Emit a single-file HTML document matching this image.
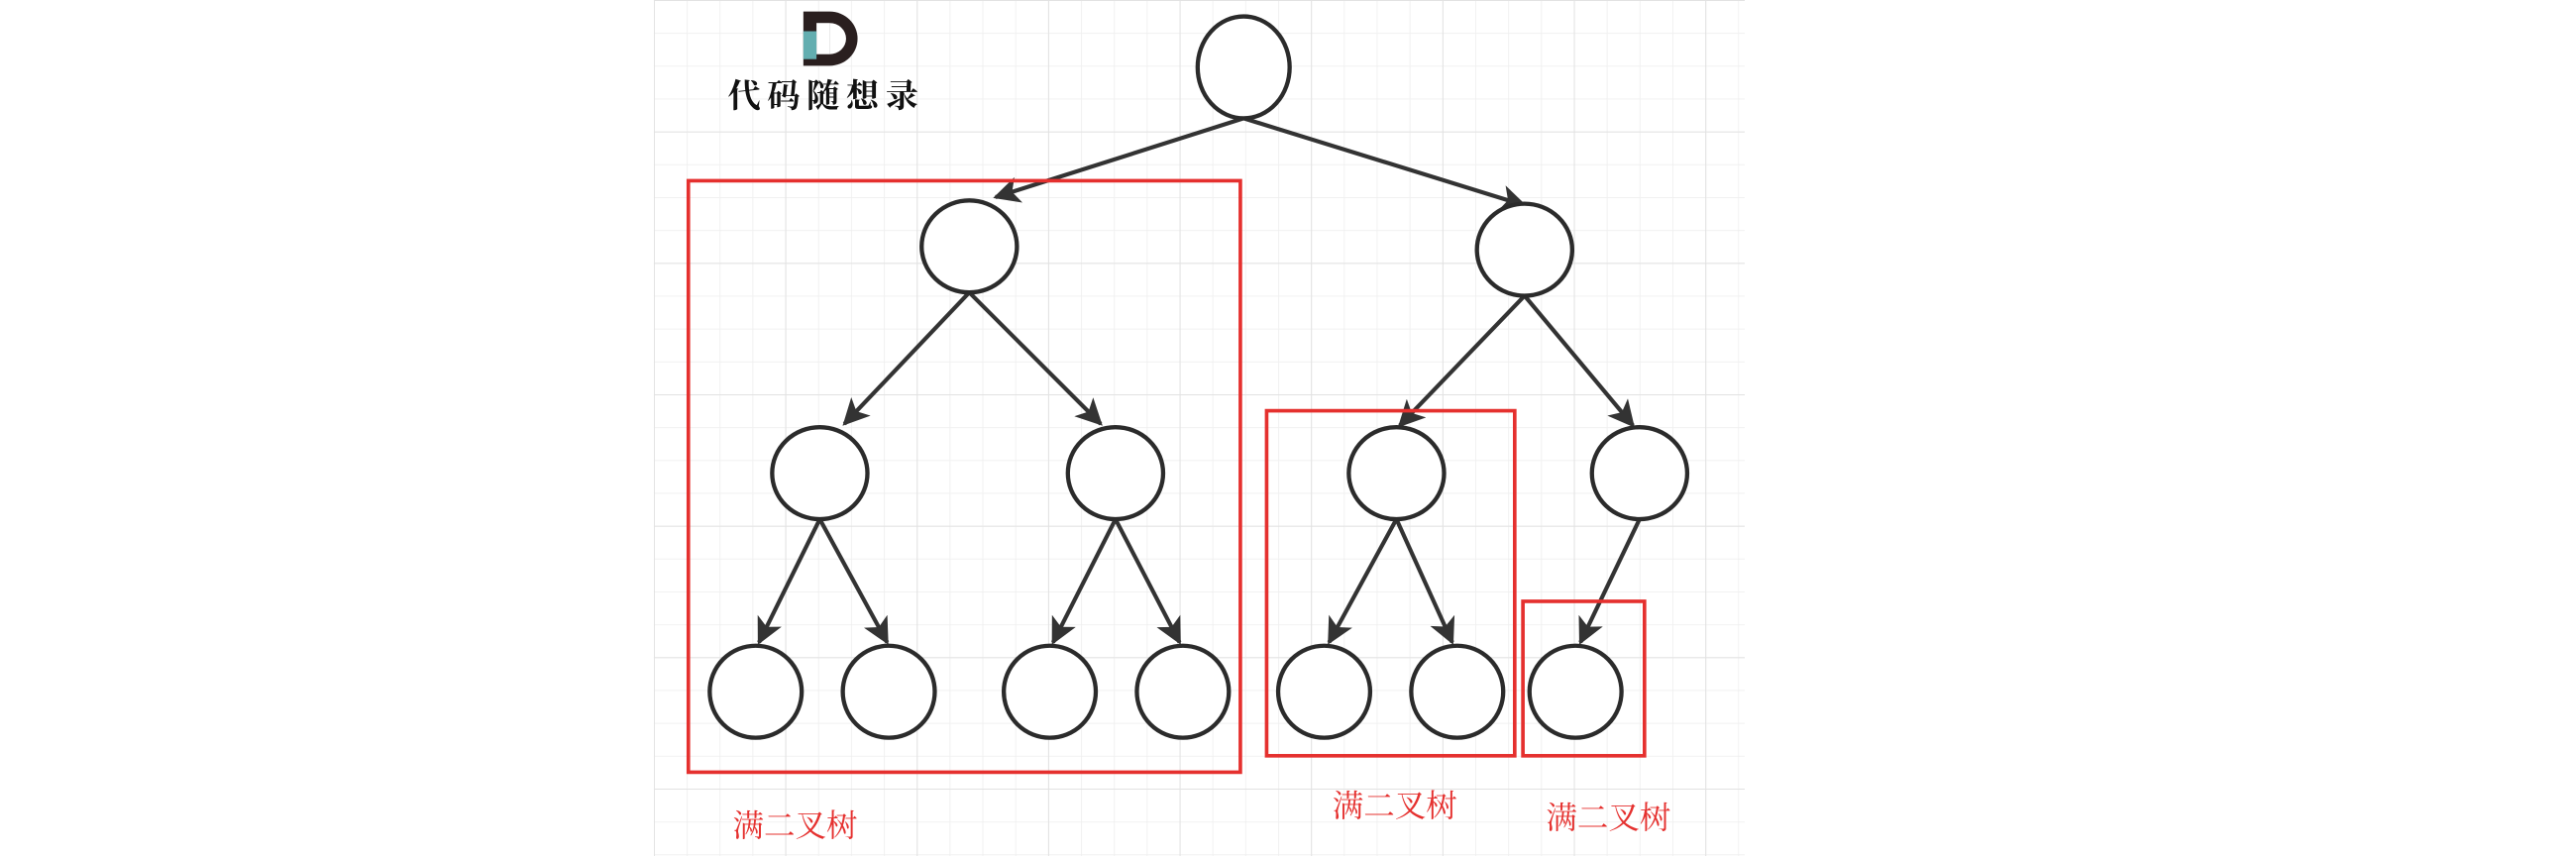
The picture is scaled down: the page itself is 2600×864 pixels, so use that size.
<!DOCTYPE html>
<html><head><meta charset="utf-8"><style>
html,body{margin:0;padding:0;background:#fff;width:2600px;height:864px;overflow:hidden}
svg{display:block}
</style></head><body>
<svg width="2600" height="864" viewBox="0 0 1568 521" preserveAspectRatio="none" xmlns="http://www.w3.org/2000/svg">
<defs>
<pattern id="g" x="398" y="0" width="20" height="20" patternUnits="userSpaceOnUse">
<path d="M0 0V20M0 0H20" stroke="#efefef" stroke-width="1" fill="none"/>
</pattern>
<pattern id="G" x="398" y="0" width="80" height="80" patternUnits="userSpaceOnUse">
<path d="M0 0V80M0 0H80" stroke="#e2e2e2" stroke-width="1.2" fill="none"/>
</pattern>
<marker id="a" viewBox="0 0 10 10" refX="9" refY="5" markerWidth="6.5" markerHeight="6.5" orient="auto" markerUnits="strokeWidth">
<path d="M0 0L10 5L0 10L2.5 5Z" fill="#333"/>
</marker>
</defs>
<rect x="398" y="0" width="664" height="521" fill="url(#g)"/>
<rect x="398" y="0" width="664" height="521" fill="url(#G)"/>
<!-- logo -->
<path d="M489 7H505A17 16.5 0 0 1 505 40H489Z" fill="#2a1f1f"/>
<rect x="497" y="14" width="8" height="19" fill="#fff"/>
<path d="M505 14A10 9.5 0 0 1 505 33Z" fill="#fff"/>
<rect x="489" y="19" width="8" height="17" fill="#63aeb0"/>
<text x="503" y="65" text-anchor="middle" font-family="'Noto Serif CJK SC','WenQuanYi Zen Hei',serif" font-weight="bold" font-size="20" letter-spacing="4" fill="#111">代码随想录</text>
<!-- edges -->
<g stroke="#333" stroke-width="2.5" fill="none" marker-end="url(#a)">
<line x1="757" y1="72" x2="606" y2="120"/>
<line x1="757" y1="72" x2="928" y2="125"/>
<line x1="590" y1="178" x2="514" y2="258"/>
<line x1="590" y1="178" x2="670" y2="258"/>
<line x1="928" y1="180" x2="852" y2="259"/>
<line x1="928" y1="180" x2="994" y2="259"/>
<line x1="499" y1="316" x2="462" y2="391"/>
<line x1="499" y1="316" x2="540" y2="391"/>
<line x1="679" y1="316" x2="641" y2="391"/>
<line x1="679" y1="316" x2="718" y2="391"/>
<line x1="850" y1="316" x2="809" y2="391"/>
<line x1="850" y1="316" x2="884" y2="391"/>
<line x1="998" y1="316" x2="962" y2="391"/>
</g>
<!-- nodes -->
<g fill="#fff" stroke="#2b2b2b" stroke-width="2.6">
<ellipse cx="757" cy="41" rx="28" ry="31"/>
<ellipse cx="590" cy="150" rx="29" ry="28"/>
<ellipse cx="928" cy="152" rx="29" ry="28"/>
<ellipse cx="499" cy="288" rx="29" ry="28"/>
<ellipse cx="679" cy="288" rx="29" ry="28"/>
<ellipse cx="850" cy="288" rx="29" ry="28"/>
<ellipse cx="998" cy="288" rx="29" ry="28"/>
<ellipse cx="460" cy="421" rx="28" ry="28"/>
<ellipse cx="541" cy="421" rx="28" ry="28"/>
<ellipse cx="639" cy="421" rx="28" ry="28"/>
<ellipse cx="720" cy="421" rx="28" ry="28"/>
<ellipse cx="806" cy="421" rx="28" ry="28"/>
<ellipse cx="887" cy="421" rx="28" ry="28"/>
<ellipse cx="959" cy="421" rx="28" ry="28"/>
</g>
<!-- red boxes -->
<g fill="none" stroke="#e5302e" stroke-width="2.2">
<rect x="419" y="110" width="336" height="360"/>
<rect x="771" y="250" width="151" height="210"/>
<rect x="927" y="366" width="74" height="94"/>
</g>
<g font-family="'Noto Serif CJK SC','Liberation Serif',serif" font-size="19" fill="#e5302e">
<text x="446" y="509">满二叉树</text>
<text x="811" y="497">满二叉树</text>
<text x="941" y="504">满二叉树</text>
</g>
</svg>
</body></html>
